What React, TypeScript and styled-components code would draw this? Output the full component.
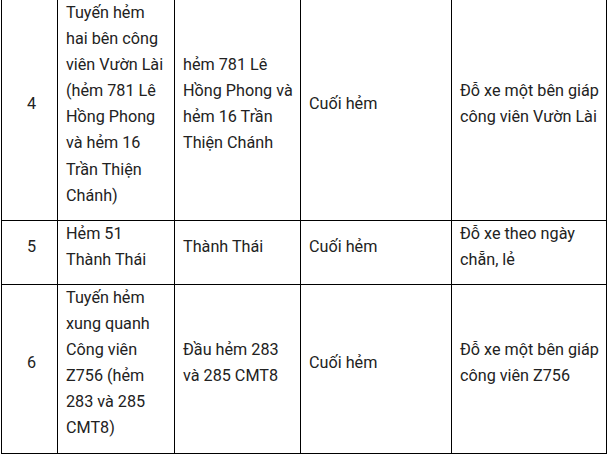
import React from 'react';
import styled, { createGlobalStyle } from 'styled-components';

// Trang nền
const GlobalStyle = createGlobalStyle`
  html, body {
    margin: 0;
    padding: 0;
    background: #fff;
  }
  body {
    font-family: Roboto, "Noto Sans", "Liberation Sans", sans-serif;
    color: #222;
  }
`;

const Page = styled.div`
  width: 609px;
  height: 455px;
  overflow: hidden;
  padding-left: 1px;
  box-sizing: border-box;
`;

const Table = styled.table`
  margin-top: -1px; /* viền trên bị cắt khỏi ảnh */
  width: 605px;
  border-collapse: collapse;
  table-layout: fixed;
`;

const Col = styled.col<{ $w: number }>`
  width: ${(p) => p.$w}px;
`;

const Cell = styled.td<{ $center?: boolean }>`
  border: 1px solid #000;
  padding: 0 4px 11px 8px;
  font-size: 16.2px;
  line-height: 26.1px;
  white-space: nowrap;
  vertical-align: middle;
  text-align: ${(p) => (p.$center ? 'center' : 'left')};
`;

const Line = styled.span`
  display: block;
`;

// mỗi ô là danh sách dòng như trong ảnh gốc
interface Row {
  stt: number;
  tuyen: string[];
  diemDau: string[];
  diemCuoi: string[];
  ghiChu: string[];
}

const colWidths = [56, 117, 126, 151, 155];

const rows: Row[] = [
  {
    stt: 4,
    tuyen: ['Tuyến hẻm', 'hai bên công', 'viên Vườn Lài', '(hẻm 781 Lê', 'Hồng Phong', 'và hẻm 16', 'Trần Thiện', 'Chánh)'],
    diemDau: ['hẻm 781 Lê', 'Hồng Phong và', 'hẻm 16 Trần', 'Thiện Chánh'],
    diemCuoi: ['Cuối hẻm'],
    ghiChu: ['Đỗ xe một bên giáp', 'công viên Vườn Lài'],
  },
  {
    stt: 5,
    tuyen: ['Hẻm 51', 'Thành Thái'],
    diemDau: ['Thành Thái'],
    diemCuoi: ['Cuối hẻm'],
    ghiChu: ['Đỗ xe theo ngày', 'chẵn, lẻ'],
  },
  {
    stt: 6,
    tuyen: ['Tuyến hẻm', 'xung quanh', 'Công viên', 'Z756 (hẻm', '283 và 285', 'CMT8)'],
    diemDau: ['Đầu hẻm 283', 'và 285 CMT8'],
    diemCuoi: ['Cuối hẻm'],
    ghiChu: ['Đỗ xe một bên giáp', 'công viên Z756'],
  },
];

const Lines: React.FC<{ items: string[] }> = ({ items }) => (
  <>
    {items.map((t, i) => (
      <Line key={i}>{t}</Line>
    ))}
  </>
);

const App: React.FC = () => {
  return (
    <Page>
      <GlobalStyle />
      <Table>
        <colgroup>
          {colWidths.map((w, i) => (
            <Col key={i} $w={w} />
          ))}
        </colgroup>
        <tbody>
          {rows.map((r) => (
            <tr key={r.stt}>
              <Cell $center>{r.stt}</Cell>
              <Cell><Lines items={r.tuyen} /></Cell>
              <Cell><Lines items={r.diemDau} /></Cell>
              <Cell><Lines items={r.diemCuoi} /></Cell>
              <Cell><Lines items={r.ghiChu} /></Cell>
            </tr>
          ))}
        </tbody>
      </Table>
    </Page>
  );
};

export default App;
